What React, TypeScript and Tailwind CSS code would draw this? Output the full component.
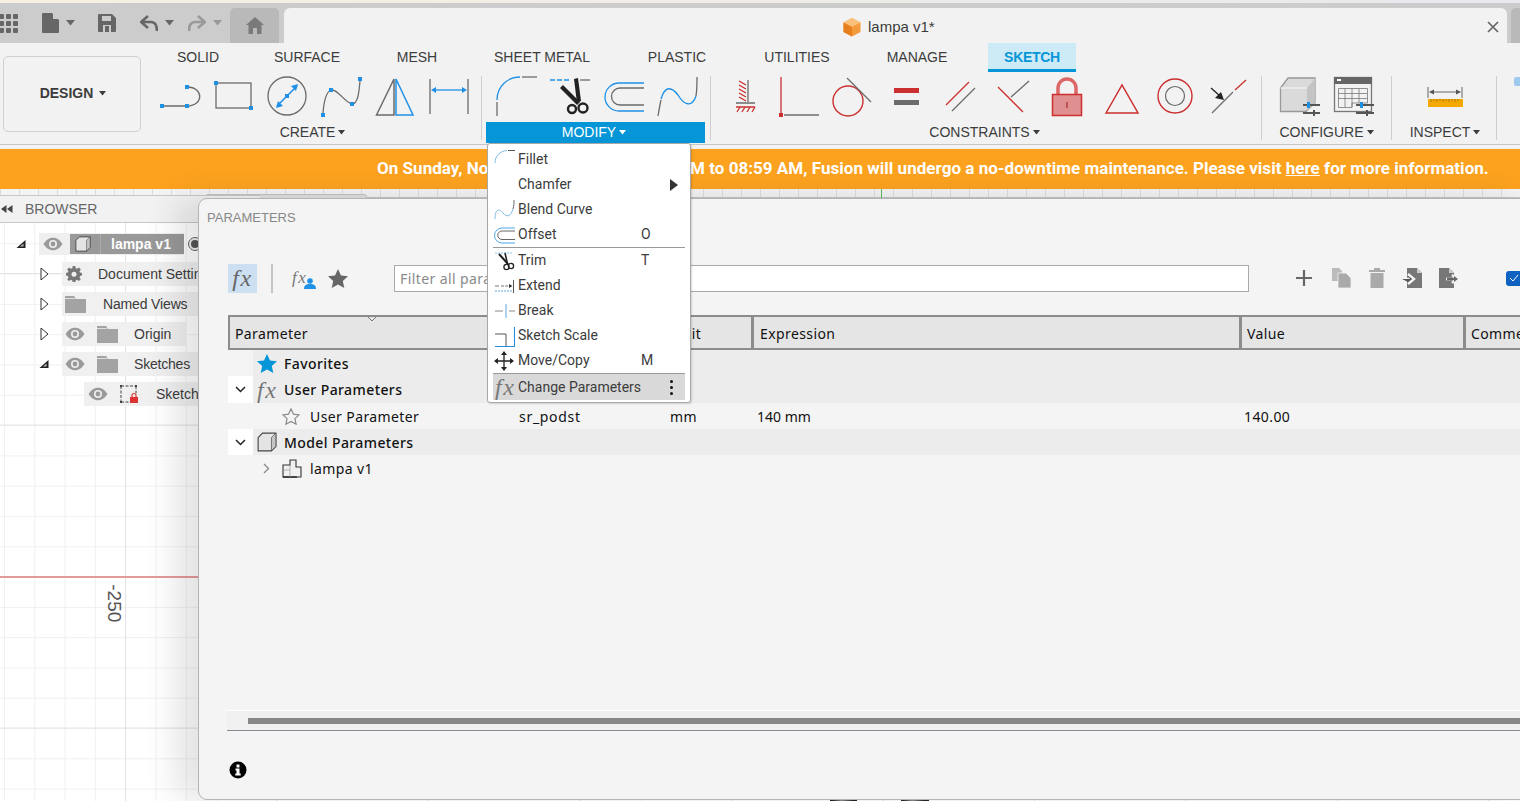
import React from "react";

const B = "#1e90e6";
const G = "#6b6b6b";
const R = "#cc2f2f";

function Ico({ x, children }: { x: number; children: React.ReactNode }) {
  return (
    <svg className="w-[54px] h-[44px] flex-none" viewBox={`${x} 76 54 44`} fill="none" strokeWidth="1.3">
      {children}
    </svg>
  );
}
function Sq({ x, y }: { x: number; y: number }) {
  return <rect x={x - 2} y={y - 2} width="4" height="4" fill={B} />;
}
function Sep() {
  return <div className="w-px h-[64px] mt-[4px] bg-[#cfcfcf] flex-none" />;
}
function Label({ children, className = "" }: { children: React.ReactNode; className?: string }) {
  return (
    <div className={`h-[20px] mt-[2px] flex items-center justify-center text-[14px] text-[#3c3c3c] gap-[3px] ${className}`}>
      {children}
      <Caret />
    </div>
  );
}
function Caret({ c = "#3c3c3c" }: { c?: string }) {
  return (
    <svg width="7" height="5" viewBox="0 0 7 5">
      <path d="M0 0h7L3.5 4.5z" fill={c} />
    </svg>
  );
}
function Tab({ className, children }: { className: string; children: React.ReactNode }) {
  return <div className={`flex items-center justify-center text-[14px] text-[#3c3c3c] ${className}`}>{children}</div>;
}

function Eye() {
  return (
    <svg width="20" height="14" viewBox="0 0 20 14" className="flex-none">
      <path d="M0.5 7C4 1.8 7 0.8 10 0.8S16 1.8 19.5 7C16 12.2 13 13.2 10 13.2S4 12.2 0.5 7z" fill="#9a9a9a" />
      <circle cx="10" cy="7" r="4" fill="#efefef" />
      <circle cx="10" cy="7" r="2.4" fill="#9a9a9a" />
    </svg>
  );
}
function Folder() {
  return (
    <svg width="21" height="17" viewBox="0 0 21 17" className="flex-none">
      <path d="M0 0h9l2 3h10v14H0z" fill="#a3a3a3" />
      <path d="M0 2.5h10" stroke="#efefef" strokeWidth="0.8" />
    </svg>
  );
}
function Open() {
  return (
    <svg width="9" height="14" viewBox="0 0 9 14" className="flex-none">
      <path d="M1 1l7 6-7 6z" fill="#fff" stroke="#333" strokeWidth="1" />
    </svg>
  );
}
function Down() {
  return (
    <svg width="10" height="10" viewBox="0 0 10 10" className="flex-none">
      <path d="M9.5 1v8H0.5z" fill="#222" />
      <path d="M7.5 4.5v3H4z" fill="#bbb" />
    </svg>
  );
}
function Fx({ className }: { className: string }) {
  return <span className={`font-['Liberation_Serif',serif] italic leading-none tracking-[1.5px] ${className}`}>fx</span>;
}
function Cube({ className, s = 18 }: { className?: string; s?: number }) {
  return (
    <svg width={s} height={s} viewBox="0 0 18 18" className={className}>
      <path d="M1 5l4-4h12v12l-4 4H1z" fill="#e4e4e4" stroke="#444" strokeWidth="1" />
      <path d="M13 5v12l4-4V1z" fill="#c4c4c4" stroke="#444" strokeWidth="0.6" />
    </svg>
  );
}
function Chevron() {
  return (
    <svg width="11" height="7" viewBox="0 0 11 7">
      <path d="M1 1l4.5 4.5L10 1" fill="none" stroke="#222" strokeWidth="1.5" />
    </svg>
  );
}

function MenuRow({ icon, label, right, className = "" }: { icon?: React.ReactNode; label: string; right?: React.ReactNode; className?: string }) {
  return (
    <div className={`flex items-center h-[25px] ${className}`}>
      <div className="w-[25px] h-full flex items-center flex-none">{icon}</div>
      <div className="flex-1">{label}</div>
      {right}
    </div>
  );
}
function Key({ children }: { children: string }) {
  return <div className="w-[44px] flex-none">{children}</div>;
}
function MI({ children }: { children: React.ReactNode }) {
  return (
    <svg width="23" height="22" viewBox="0 0 23 22" fill="none" strokeWidth="1" className="flex-none">
      {children}
    </svg>
  );
}

const cols = "grid grid-cols-[285px_151px_90px_488px_224px_200px]";

export default function App() {
  return (
    <div className="relative w-[1520px] h-[801px] overflow-hidden flex flex-col bg-white font-['Liberation_Sans',Arial,sans-serif]">
      <div className="h-[3px] flex-none bg-gradient-to-r from-[#f7f0e2] to-[#e8e9ee]" />

      {/* Quick access + document tab */}
      <div className="h-[40px] flex-none bg-[#cccccc] flex items-end">
        <div className="w-[230px] h-full flex items-center relative flex-none">
          <svg width="19" height="19" viewBox="0 0 19 19" className="ml-[-1px] flex-none">
            <g fill="#666">
              <rect x="0" y="0" width="5" height="5" rx="1" />
              <rect x="7" y="0" width="5" height="5" rx="1" />
              <rect x="14" y="0" width="5" height="5" rx="1" />
              <rect x="0" y="7" width="5" height="5" rx="1" />
              <rect x="7" y="7" width="5" height="5" rx="1" />
              <rect x="14" y="7" width="5" height="5" rx="1" />
              <rect x="0" y="14" width="5" height="5" rx="1" />
              <rect x="7" y="14" width="5" height="5" rx="1" />
              <rect x="14" y="14" width="5" height="5" rx="1" />
            </g>
          </svg>
          <svg width="17" height="20" viewBox="0 0 17 20" className="ml-[24px] flex-none">
            <path d="M1 0h9l7 7v12a1 1 0 0 1-1 1H1a1 1 0 0 1-1-1V1a1 1 0 0 1 1-1z" fill="#666" />
            <path d="M11 0l6 6h-6z" fill="#ccc" />
          </svg>
          <svg width="9" height="6" viewBox="0 0 9 6" className="ml-[7px] flex-none"><path d="M0 0h9L4.500 5.500z" fill="#666" /></svg>
          <svg width="18" height="18" viewBox="0 0 18 18" className="ml-[23px] flex-none">
            <path d="M1 0h13l4 4v13a1 1 0 0 1-1 1H1a1 1 0 0 1-1-1V1a1 1 0 0 1 1-1z" fill="#666" />
            <rect x="4" y="2" width="9" height="5" fill="#ccc" />
            <rect x="5" y="11" width="8" height="7" fill="#ccc" />
            <rect x="7" y="12" width="4" height="6" fill="#666" />
          </svg>
          <svg width="18" height="17" viewBox="0 0 18 17" className="ml-[24px] flex-none">
            <path d="M8 1L1 7l7 6M2 7h9c4 0 6 3 6 9" fill="none" stroke="#666" strokeWidth="2.600" />
          </svg>
          <svg width="9" height="6" viewBox="0 0 9 6" className="ml-[7px] flex-none"><path d="M0 0h9L4.500 5.500z" fill="#666" /></svg>
          <svg width="18" height="17" viewBox="0 0 18 17" className="ml-[14px] flex-none">
            <path d="M10 1l7 6-7 6M16 7H7c-4 0-6 3-6 9" fill="none" stroke="#999" strokeWidth="2.600" />
          </svg>
          <svg width="9" height="6" viewBox="0 0 9 6" className="ml-[7px] flex-none"><path d="M0 0h9L4.500 5.500z" fill="#999" /></svg>
        </div>
        <div className="w-[49px] h-[35px] flex-none rounded-t-[5px] bg-[#b9b9b9] flex items-center justify-center">
          <svg width="18" height="17" viewBox="0 0 18 17">
            <path d="M9 0L0 8h2.500v9h4.500v-6h4v6h4.500V8H18z" fill="#7a7a7a" />
          </svg>
        </div>
        <div className="w-[5px] flex-none" />
        <div className="w-[1223px] h-[35px] flex-none rounded-t-[6px] bg-[#f2f2f2] flex items-center relative">
          <div className="ml-[558px] flex items-center gap-[6px] text-[15px] text-[#3c3c3c] mt-[3px]">
            <svg width="20" height="20" viewBox="0 0 20 20" className="flex-none">
              <path d="M10 1l8.500 4.500v9.500L10 19.500 1.500 15V5.500z" fill="#f39a3c" />
              <path d="M10 1l8.500 4.500L10 10 1.500 5.500z" fill="#fbc17c" />
              <path d="M10 10v9.500L1.500 15V5.500z" fill="#e87f1e" />
            </svg>
            <span>lampa v1*</span>
          </div>
          <svg width="12" height="12" viewBox="0 0 12 12" className="absolute right-[8px] top-[13px]">
            <path d="M1 1l10 10M11 1L1 11" stroke="#666" strokeWidth="1.700" />
          </svg>
        </div>
        <div className="w-[4px] flex-none" />
        <div className="w-[9px] h-[35px] flex-none rounded-tl-[5px] bg-[#b9b9b9]" />
      </div>

      {/* Ribbon */}
      <div className="h-[102px] flex-none bg-[#f2f2f2] flex border-b border-[#c6c6c6]">
        <div className="w-[147px] flex-none pl-[3px] pt-[13px]">
          <div className="w-[138px] h-[76px] border border-[#d0d0d0] rounded-[5px] flex items-center justify-center gap-[6px] pb-[2px] pl-[2px] text-[14px] font-bold text-[#3c3c3c]">
            DESIGN
            <Caret />
          </div>
        </div>
        <div className="flex-1 flex flex-col min-w-0">
          <div className="h-[29px] flex flex-none">
            <Tab className="w-[101px] pl-[1px]">SOLID</Tab>
            <Tab className="w-[118px]">SURFACE</Tab>
            <Tab className="w-[102px]">MESH</Tab>
            <Tab className="w-[148px]">SHEET METAL</Tab>
            <Tab className="w-[122px]">PLASTIC</Tab>
            <Tab className="w-[118px]">UTILITIES</Tab>
            <Tab className="w-[122px]">MANAGE</Tab>
            <div className="w-[10px]" />
            <div className="w-[88px] bg-[#cdeaf7] border-b-[3px] border-[#0696d7] flex items-center justify-center text-[14px] font-bold text-[#0696d7] pt-[3px] tracking-[-0.3px]">SKETCH</div>
          </div>
          <div className="flex flex-1">
            {/* CREATE */}
            <div className="w-[334px] flex-none pt-[4px]">
              <div className="flex pl-[6px]">
                <Ico x={153}>
                  <path d="M164 106H187M187 87C204 87 204 106 187 106" stroke={G} />
                  <Sq x={162} y={106} /><Sq x={187} y={106} /><Sq x={187} y={87} />
                </Ico>
                <Ico x={207}>
                  <rect x="216" y="83" width="35" height="25" stroke={G} />
                  <Sq x={216} y={83} /><Sq x={251} y={108} />
                </Ico>
                <Ico x={261}>
                  <circle cx="287" cy="96" r="19" stroke={G} />
                  <path d="M277 106L297 86" stroke={B} strokeWidth="1.600" />
                  <path d="M276 108l7-2-5-5zM298 84l-7 2 5 5z" fill={B} />
                  <Sq x={287} y={96} />
                </Ico>
                <Ico x={315}>
                  <path d="M323 113C324 100 326 92 331 90C337 88 345 103 352 104C358 104 359 92 360 81" stroke={G} />
                  <Sq x={323} y={115} /><Sq x={331} y={90} /><Sq x={352} y={104} /><Sq x={360} y={79} />
                </Ico>
                <Ico x={369}>
                  <path d="M376.500 115L394 79V115z" stroke={G} strokeWidth="1.500" />
                  <path d="M396 115V79L413 115z" stroke={B} strokeWidth="1.500" />
                </Ico>
                <Ico x={423}>
                  <path d="M430 79V114M468 79V114" stroke={G} />
                  <path d="M434 90H464" stroke={B} strokeWidth="1.300" />
                  <path d="M431 90l5-3v6zM467 90l-5-3v6z" fill={B} />
                </Ico>
              </div>
              <Label className="pr-[3px]">CREATE</Label>
            </div>
            <Sep />
            <div className="w-[4px] flex-none" />
            {/* MODIFY */}
            <div className="w-[219px] flex-none pt-[4px]">
              <div className="flex pl-[3px]">
                <Ico x={489}>
                  <path d="M497 102V116" stroke={G} />
                  <path d="M497 100C497 86 508 77 520 77" stroke={B} />
                  <path d="M522 77H537" stroke={G} />
                </Ico>
                <Ico x={543}>
                  <path d="M550 80H571" stroke={B} strokeDasharray="5 2" />
                  <path d="M580 80H590" stroke={G} />
                  <path d="M560 88L563 85L580 102L577 105z" fill="#222" />
                  <path d="M574 79L578 78L581 101L577 103z" fill="#222" />
                  <circle cx="572" cy="109" r="4" stroke="#222" strokeWidth="2.400" />
                  <circle cx="583" cy="108" r="4.500" stroke="#222" strokeWidth="2.400" />
                </Ico>
                <Ico x={597}>
                  <path d="M644 83H619A14 14 0 0 0 619 111H644" stroke={B} />
                  <path d="M644 88H620A8.500 8.500 0 0 0 620 105H644" stroke={G} />
                </Ico>
                <Ico x={651}>
                  <path d="M658 116C659 110 660 104 661 100M696 96C697 90 697 84 697 77" stroke={G} />
                  <path d="M661 99C665 85 672 87 678 95C684 105 692 108 696 96" stroke={B} />
                </Ico>
              </div>
              <div className="h-[21px] mt-[2px] bg-[#0696d7] text-white text-[14px] flex items-center justify-center gap-[3px] pr-[3px]">
                MODIFY
                <Caret c="#fff" />
              </div>
            </div>
            <div className="w-[5px] flex-none" />
            <Sep />
            {/* CONSTRAINTS */}
            <div className="w-[550px] flex-none pt-[4px]">
              <div className="flex pl-[7px]">
                <Ico x={718}>
                  <path d="M748 80V102M736 103H755" stroke={G} />
                  <path d="M739 81l7 4M739 85l7 4M739 89l7 4M739 93l7 4M739 97l7 4" stroke={R} />
                  <path d="M736 107H755" stroke={R} strokeWidth="1.500" />
                  <path d="M740 107l-3 5M745 107l-3 5M750 107l-3 5M755 107l-3 5" stroke={R} />
                </Ico>
                <Ico x={772}>
                  <path d="M781 77V113" stroke={R} />
                  <rect x="779" y="113" width="4" height="4" fill={R} />
                  <path d="M784 115H819" stroke={G} />
                </Ico>
                <Ico x={826}>
                  <circle cx="848" cy="101" r="15" stroke={R} strokeWidth="1.400" />
                  <path d="M847 78L871 102" stroke={G} />
                </Ico>
                <Ico x={880}>
                  <rect x="894" y="88" width="25" height="5" fill={R} />
                  <rect x="894" y="100" width="25" height="5" fill={G} />
                </Ico>
                <Ico x={934}>
                  <path d="M946 105L969 82" stroke={R} />
                  <path d="M952 111L975 88" stroke={G} />
                </Ico>
                <Ico x={988}>
                  <path d="M998 87L1023 112" stroke={R} />
                  <path d="M1011 97L1029 81" stroke={G} />
                </Ico>
                <Ico x={1042}>
                  <path d="M1058 95V88A9 9 0 0 1 1076 88V95" stroke="#d66" strokeWidth="3.500" />
                  <rect x="1052.500" y="94.500" width="29" height="21" fill="#e08f91" stroke={R} strokeWidth="1.500" />
                  <path d="M1067 102V108" stroke="#a33" />
                </Ico>
                <Ico x={1096}>
                  <path d="M1106 113L1122 85L1138 113z" stroke={R} strokeWidth="1.500" />
                </Ico>
                <Ico x={1150}>
                  <circle cx="1175" cy="96" r="17" stroke={R} strokeWidth="1.400" />
                  <circle cx="1175" cy="96" r="9.500" stroke={G} strokeWidth="1.200" />
                </Ico>
                <Ico x={1204}>
                  <path d="M1212 113L1233 92" stroke={G} />
                  <path d="M1235 90L1246 80" stroke={R} />
                  <path d="M1211 88L1220 96" stroke="#222" strokeWidth="1.300" />
                  <path d="M1224 100l-9-2 6-6z" fill="#222" />
                </Ico>
              </div>
              <Label className="pr-[3px]">CONSTRAINTS</Label>
            </div>
            <Sep />
            {/* CONFIGURE */}
            <div className="w-[129px] flex-none pt-[4px]">
              <div className="flex pl-[9px]">
                <Ico x={1271}>
                  <path d="M1280.500 88L1288 78H1315V103L1306 111.500H1280.500z" fill="#dadada" stroke="#999" />
                  <path d="M1307 88L1315 78V103L1307 111z" fill="#c4c4c4" />
                  <path d="M1280.500 88H1307" stroke="#f2f2f2" />
                  <path d="M1303 105H1320M1303 113H1320" stroke="#555" strokeWidth="2.200" />
                  <rect x="1307" y="102" width="3" height="6" fill={B} />
                  <path d="M1314 110V116" stroke="#555" strokeWidth="2" />
                </Ico>
                <Ico x={1325}>
                  <rect x="1334.500" y="77.500" width="37" height="34" fill="#f2f2f2" stroke="#777" />
                  <rect x="1334" y="77" width="38" height="7" fill="#666" />
                  <rect x="1337" y="79" width="4" height="2" fill="#fff" />
                  <path d="M1338.500 88.500H1367.500V103H1352V107.500H1338.500zM1338.500 93.500H1367M1338.500 98.500H1367M1345 88.500V107M1352 88.500V107M1359 88.500V103" stroke="#777" strokeWidth="0.800" />
                  <path d="M1356 105H1374M1356 113H1374" stroke="#555" strokeWidth="2.200" />
                  <rect x="1360" y="102" width="3" height="6" fill={B} />
                  <path d="M1367 110V116" stroke="#555" strokeWidth="2" />
                </Ico>
              </div>
              <Label>CONFIGURE</Label>
            </div>
            <Sep />
            {/* INSPECT */}
            <div className="w-[104px] flex-none pt-[4px]">
              <div className="flex pl-[26px]">
                <Ico x={1418}>
                  <path d="M1428 87V98M1462 87V98M1430 92H1460" stroke="#555" strokeWidth="0.900" />
                  <path d="M1429 92l5-2.500v5zM1461 92l-5-2.500v5z" fill="#555" />
                  <rect x="1428" y="99" width="35" height="8" fill="#f5a800" />
                  <path d="M1431 99v3M1434 99v2M1437 99v3M1440 99v2M1443 99v3M1446 99v2M1449 99v3M1452 99v2M1455 99v3M1458 99v2" stroke="#8a6a10" strokeWidth="0.700" />
                </Ico>
              </div>
              <Label className="pl-[2px]">INSPECT</Label>
            </div>
            <Sep />
            <div className="pl-[17px] pt-[5px]">
              <div className="w-[10px] h-[9px] rounded-[2px] bg-[#9fc9ee]" />
            </div>
          </div>
        </div>
      </div>

      <div className="h-[4px] flex-none bg-[#f2f2f2]" />

      {/* Banner */}
      <div className="h-[40px] flex-none bg-[#fca21f] text-white font-['Roboto',sans-serif] font-bold text-[17px] tracking-[0.035px] flex items-center">
        <span className="ml-[377px] w-[313px] flex-none whitespace-nowrap overflow-hidden">On Sunday, No</span>
        <span className="whitespace-nowrap">
          M to 08:59 AM, Fusion will undergo a no-downtime maintenance. Please visit <span className="underline">here</span> for more information.
        </span>
      </div>

      {/* Canvas */}
      <div className="relative flex-1 bg-white bg-[linear-gradient(to_right,#e4e4e4_1px,transparent_1px),linear-gradient(to_bottom,#e4e4e4_1px,transparent_1px),linear-gradient(to_right,#f0f0f0_1px,transparent_1px),linear-gradient(to_bottom,#f0f0f0_1px,transparent_1px)] bg-[size:151.500px_151.500px,151.500px_151.500px,30.300px_30.300px,30.300px_30.300px] bg-[position:125px_84px,125px_84px,4px_24px,4px_24px]">
        <div className="h-[9px] bg-[#f4f4f4] border-b border-[#c4c4c4] bg-[linear-gradient(to_right,#dedede_1px,transparent_1px)] bg-[size:19px_100%]" />
        <div className="absolute left-[881px] top-0 h-[9px] w-px bg-[#5cbf5c]" />
        <div className="absolute left-0 right-0 top-[387px] h-[2px] bg-[#e59a9a]" />
        <div className="absolute left-[102px] top-[399px] w-[24px] h-[30px] flex items-center justify-center">
          <span className="rotate-90 text-[19px] text-[#555] whitespace-nowrap">-250</span>
        </div>
        <div className="absolute left-[205px] top-[5px] w-[162px] h-[6px] bg-[#e0e0e0] border border-[#c4c4c4] rounded-t-[3px]" />
        <svg className="absolute left-[825px] top-[608px]" width="110" height="4" viewBox="0 0 110 4">
          <path d="M5 3.500C15 2 25 3 32 3.500M76 3.500C85 2 95 3 104 3.500" stroke="#222" strokeWidth="1.500" fill="none" />
        </svg>

        {/* Browser panel */}
        <div className="absolute left-0 top-[6px] w-[260px]">
          <div className="h-[28px] bg-[#f2f2f2] border-y border-[#c8c8c8] flex items-center pl-[1px] gap-[12px] text-[14px] text-[#666]">
            <svg width="12" height="8" viewBox="0 0 12 8" className="flex-none">
              <path d="M5.500 0v8L0 4zM11.500 0v8L6 4z" fill="#444" />
            </svg>
            BROWSER
          </div>
          <div className="pt-[6px] text-[14px] text-[#3c3c3c]">
            <div className="h-[30px] flex items-center pl-[16px]">
              <Down />
              <div className="ml-[13px] h-[22px] w-[145px] bg-[#efefef] flex items-center pl-[4px]">
                <Eye />
                <div className="ml-[7px] h-[20px] w-[114px] bg-[#999999] flex items-center">
                  <Cube className="ml-[5px]" s={16} />
                  <div className="ml-[9px] w-px h-full bg-[#aaa]" />
                  <span className="ml-[10px] font-bold text-white">lampa v1</span>
                </div>
              </div>
              <div className="ml-[4px] w-[14px] h-[14px] rounded-full border border-[#666] bg-[#eee] flex items-center justify-center">
                <div className="w-[8px] h-[8px] rounded-full bg-[#555]" />
              </div>
            </div>
            <div className="h-[30px] flex items-center pl-[40px]">
              <Open />
              <div className="ml-[13px] h-[24px] w-[160px] bg-[#f0f0f0] flex items-center pl-[4px] whitespace-nowrap">
                <svg width="16" height="16" viewBox="0 0 16 16" className="flex-none">
                  <path d="M6.700 0h2.600l.4 2.200 1.400.6L13 1.500 14.800 3.400l-1.300 1.800.6 1.400 2 .4v2.600l-2 .4-.6 1.400 1.300 1.800-1.800 1.900-1.900-1.300-1.400.6-.4 2.200H6.700l-.4-2.200-1.400-.6L3 15.100 1.200 13.200l1.300-1.800-.6-1.400-2-.4V7l2-.4.6-1.400L1.200 3.400 3 1.500l1.900 1.300 1.400-.6z" fill="#777" />
                  <circle cx="8" cy="8.300" r="2.500" fill="#f0f0f0" />
                </svg>
                <span className="ml-[16px]">Document Settings</span>
              </div>
            </div>
            <div className="h-[30px] flex items-center pl-[40px]">
              <Open />
              <div className="ml-[13px] h-[24px] w-[136px] bg-[#f0f0f0] flex items-center pl-[3px]">
                <Folder />
                <span className="ml-[17px] tracking-[-0.15px]">Named Views</span>
              </div>
            </div>
            <div className="h-[30px] flex items-center pl-[40px]">
              <Open />
              <div className="ml-[13px] h-[24px] w-[124px] bg-[#f0f0f0] flex items-center pl-[3px]">
                <Eye />
                <div className="ml-[12px]"><Folder /></div>
                <span className="ml-[16px]">Origin</span>
              </div>
            </div>
            <div className="h-[30px] flex items-center pl-[39px]">
              <Down />
              <div className="ml-[13px] h-[24px] w-[136px] bg-[#f0f0f0] flex items-center pl-[3px]">
                <Eye />
                <div className="ml-[12px]"><Folder /></div>
                <span className="ml-[16px] tracking-[-0.2px]">Sketches</span>
              </div>
            </div>
            <div className="h-[30px] flex items-center pl-[84px]">
              <div className="h-[24px] w-[130px] bg-[#f0f0f0] flex items-center pl-[4px]">
                <Eye />
                <svg width="20" height="20" viewBox="0 0 20 20" className="ml-[11px] flex-none">
                  <path d="M2 2H17M2 2V18M2 18H10M17 2V10" stroke="#444" strokeWidth="1" strokeDasharray="3 1.500" fill="none" />
                  <rect x="1" y="1" width="2" height="2" fill="#444" />
                  <rect x="16" y="1" width="2" height="2" fill="#444" />
                  <rect x="1" y="17" width="2" height="2" fill="#444" />
                  <rect x="11" y="13" width="8" height="6" fill="#d33" />
                  <path d="M13 13V11.500a2 2 0 0 1 4 0V13" stroke="#d33" strokeWidth="1.200" fill="none" />
                </svg>
                <span className="ml-[17px]">Sketch1</span>
              </div>
            </div>
          </div>
        </div>

        {/* Parameters dialog */}
        <div className="absolute left-[198px] top-[9px] w-[1340px] h-[602px] bg-[#f4f4f4] border border-[#b4b4b4] rounded-[9px] shadow-[-22px_0_32px_rgba(0,0,0,0.11)] flex flex-col font-['Noto_Sans',sans-serif] text-[14px] text-[#111] tracking-[0.4px]">
          <div className="h-[38px] flex-none pl-[8px] flex items-center font-['Liberation_Sans',sans-serif] text-[13px] tracking-normal text-[#888]">PARAMETERS</div>
          <div className="h-[30px] flex-none mt-[26px] pl-[29px] flex items-center">
            <div className="w-[29px] h-[29px] bg-[#cde0f2] flex items-center justify-center flex-none">
              <Fx className="text-[24px] text-[#666]" />
            </div>
            <div className="ml-[14px] w-[2px] h-[29px] bg-[#c4c4c4] flex-none" />
            <div className="ml-[19px] relative w-[22px] h-[22px] flex-none">
              <Fx className="text-[17px] text-[#777]" />
              <svg width="12" height="11" viewBox="0 0 12 11" className="absolute right-[-2px] bottom-0">
                <circle cx="6" cy="3" r="2.800" fill={B} />
                <path d="M0 11c0-4 2.500-5 6-5s6 1 6 5z" fill={B} />
              </svg>
            </div>
            <svg width="20" height="19" viewBox="0 0 20 19" className="ml-[14px] flex-none">
              <path d="M10 0l3 6.500 7 .8-5.200 4.700 1.500 7L10 15.500 3.700 19l1.500-7L0 7.300l7-.8z" fill="#666" />
            </svg>
            <div className="ml-[46px] w-[855px] h-[27px] bg-white border border-[#aaa] flex items-center pl-[5px] text-[#8a8a8a] flex-none">Filter all parameters</div>
            <svg width="16" height="16" viewBox="0 0 16 16" className="ml-[47px] flex-none">
              <path d="M8 0v16M0 8h16" stroke="#666" strokeWidth="2.200" />
            </svg>
            <svg width="20" height="20" viewBox="0 0 20 20" className="ml-[20px] flex-none">
              <path d="M0 0h7l3 3v10H0z" fill="#bbb" />
              <path d="M6 5h8l5 5v10H6z" fill="#aaa" stroke="#f4f4f4" strokeWidth="0.800" />
            </svg>
            <svg width="16" height="20" viewBox="0 0 16 20" className="ml-[17px] flex-none">
              <path d="M0 2h16v2H0zM5 0h6v2H5zM1.500 5h13v15h-13z" fill="#aaa" />
            </svg>
            <svg width="20" height="20" viewBox="0 0 20 20" className="ml-[17px] flex-none">
              <path d="M5 0h10l5 5v15H5z" fill="#777" />
              <path d="M15 0l5 5h-5z" fill="#ccc" />
              <path d="M0 11h8M6 6l6 5-6 5" fill="none" stroke="#f4f4f4" strokeWidth="2.400" />
              <path d="M0 11h8l-2-3 4 3-4 3z" fill="#555" />
            </svg>
            <svg width="20" height="20" viewBox="0 0 20 20" className="ml-[17px] flex-none">
              <path d="M0 0h10l5 5v15H0z" fill="#777" />
              <path d="M10 0l5 5h-5z" fill="#ccc" />
              <path d="M7 11h8M13 7l5 4-5 4" fill="none" stroke="#f4f4f4" strokeWidth="2.400" />
              <path d="M8 10h7V8l4 3-4 3v-2H8z" fill="#666" />
            </svg>
            <div className="ml-[47px] w-[16px] h-[15px] rounded-[3px] bg-[#0f62c0] flex items-center justify-center flex-none">
              <svg width="10" height="8" viewBox="0 0 10 8"><path d="M1 4l3 3 5-6" fill="none" stroke="#fff" strokeWidth="1" /></svg>
            </div>
          </div>

          {/* Table */}
          <div className="ml-[29px] mt-[22px] flex-none">
            <div className={`${cols} h-[35px] bg-[#e5e5e5] border-y-2 border-[#8c8c8c] relative`}>
              <div className="border-x-2 border-[#8c8c8c] pl-[5px] pt-[1px] flex items-center">Parameter</div>
              <div className="border-r-2 border-[#8c8c8c]" />
              <div className="border-r-[3px] border-[#8c8c8c] pl-[8px] pt-[1px] flex items-center">Unit</div>
              <div className="border-r-[3px] border-[#8c8c8c] pl-[6px] pt-[1px] flex items-center">Expression</div>
              <div className="border-r-[3px] border-[#8c8c8c] pl-[5px] pt-[1px] flex items-center">Value</div>
              <div className="pl-[5px] pt-[1px] flex items-center">Comments</div>
              <svg width="10" height="6" viewBox="0 0 10 6" className="absolute left-[139px] top-[-1px]">
                <path d="M0.500 0.500L5 5l4.500-4.500" fill="none" stroke="#777" strokeWidth="1" />
              </svg>
            </div>
            <div className="h-[26px] flex items-center bg-[#ececec] ml-[25px]">
              <svg width="20" height="19" viewBox="0 0 20 19" className="ml-[4px] flex-none">
                <path d="M10 0l3 6.500 7 .8-5.200 4.700 1.500 7L10 15.500 3.700 19l1.500-7L0 7.300l7-.8z" fill="#0696d7" />
              </svg>
              <span className="ml-[7px] font-medium">Favorites</span>
            </div>
            <div className="h-[27px] flex items-center bg-[#ececec]">
              <div className="w-[25px] h-full bg-white flex items-center justify-center flex-none"><Chevron /></div>
              <Fx className="ml-[4px] w-[22px] text-[24px] text-[#777]" />
              <span className="ml-[5px] font-medium">User Parameters</span>
            </div>
            <div className={`${cols} h-[26px] items-center`}>
              <div className="pl-[54px] flex items-center">
                <svg width="18" height="17" viewBox="0 0 20 19" className="flex-none">
                  <path d="M10 1l2.800 5.900 6.200.8-4.600 4.200 1.300 6.200L10 15 4.300 18.100l1.300-6.200L1 7.700l6.200-.8z" fill="none" stroke="#888" strokeWidth="1.300" />
                </svg>
                <span className="ml-[10px]">User Parameter</span>
              </div>
              <div className="pl-[6px] tracking-[0.7px]">sr_podst</div>
              <div className="pl-[6px]">mm</div>
              <div className="pl-[3px] tracking-normal">140 mm</div>
              <div className="pl-[2px]">140.00</div>
              <div />
            </div>
            <div className="h-[26px] flex items-center bg-[#ececec]">
              <div className="w-[25px] h-full bg-white flex items-center justify-center flex-none"><Chevron /></div>
              <Cube className="ml-[4px] flex-none" s={20} />
              <span className="ml-[7px] font-medium">Model Parameters</span>
            </div>
            <div className="h-[26px] flex items-center">
              <svg width="7" height="11" viewBox="0 0 7 11" className="ml-[35px] flex-none">
                <path d="M1 1l4.500 4.500L1 10" fill="none" stroke="#888" strokeWidth="1.300" />
              </svg>
              <svg width="20" height="19" viewBox="0 0 20 19" className="ml-[12px] flex-none">
                <path d="M1 6h7V1h6v7h5v10H1z" fill="#f0f0f0" stroke="#333" strokeWidth="1.100" />
                <path d="M1 18h14" stroke="#333" strokeWidth="1.600" />
                <path d="M8 6v12M1 11h7" stroke="#999" strokeWidth="0.700" />
              </svg>
              <span className="ml-[8px]">lampa v1</span>
            </div>
          </div>

          <div className="flex-1" />
          <div className="ml-[28px] h-[21px] flex-none border-t border-b border-t-white border-b-[#8a8a96] bg-[#f0f0f0] flex items-center pl-[21px]">
            <div className="w-full h-[6px] bg-[#888888]" />
          </div>
          <div className="h-[68px] flex-none pl-[30px] pt-[30px]">
            <svg width="18" height="18" viewBox="0 0 18 18">
              <circle cx="9" cy="9" r="8.500" fill="#000" />
              <rect x="7.500" y="3.500" width="3" height="3" fill="#fff" />
              <path d="M6.500 7.500h4v5h1.200v2H6.300v-2h1.200v-3h-1z" fill="#fff" />
            </svg>
          </div>
        </div>
      </div>

      {/* MODIFY dropdown */}
      <div className="absolute left-[487px] top-[143px] w-[204px] h-[260px] bg-white border border-[#a8a8a8] rounded-[3px] px-[5px] pt-[3px] font-['Roboto',sans-serif] text-[14px] text-[#3c3c3c] shadow-[1px_1px_2px_rgba(0,0,0,0.15)]">
        <MenuRow label="Fillet" icon={<MI><path d="M2 14C2 7 7 2 14 1.500" stroke="#7dbce8" /><path d="M15 1.500h7" stroke="#555" /></MI>} />
        <MenuRow label="Chamfer" right={<svg width="8" height="12" viewBox="0 0 8 12" className="mr-[7px]"><path d="M0 0l8 6-8 6z" fill="#333" /></svg>} />
        <MenuRow label="Blend Curve" icon={<MI><path d="M2 20C2 10 6 9 10 14C14 19 18 17 20 10" stroke="#7dbce8" /><path d="M20 10C21 7 21 4 21 1" stroke="#666" /></MI>} />
        <MenuRow label="Offset" right={<Key>O</Key>} icon={<MI><path d="M22 4H9A7.500 7.500 0 0 0 9 19H22" stroke="#4ba7e6" /><path d="M22 7H9A4 4 0 0 0 9 15.500H22" stroke="#666" /></MI>} />
        <div className="h-px bg-[#999]" />
        <MenuRow label="Trim" right={<Key>T</Key>} icon={<MI><path d="M2 3h18" stroke="#8cc4ea" strokeDasharray="2 1" /><path d="M6 4L15 14" stroke="#222" strokeWidth="2" /><path d="M12 3L14.500 14" stroke="#222" strokeWidth="1.600" /><circle cx="13.500" cy="17" r="2.600" stroke="#222" strokeWidth="1.300" /><circle cx="18" cy="16" r="2.600" stroke="#222" strokeWidth="1.300" /></MI>} />
        <MenuRow label="Extend" icon={<MI><path d="M2 11H6" stroke="#777" /><path d="M8 11H17" stroke="#777" strokeDasharray="3 1" /><path d="M19.500 11l-3.500-2v4z" fill="#333" /><path d="M2 16H20" stroke="#5aa9e0" strokeDasharray="2 1" /><path d="M20.500 5V18" stroke="#555" /></MI>} />
        <MenuRow label="Break" icon={<MI><path d="M2 11H10M16 11H22" stroke="#888" /><path d="M13 4V18" stroke="#5aa9e0" /></MI>} />
        <MenuRow label="Sketch Scale" icon={<MI><path d="M2 9H13V21" stroke="#555" /><path d="M2 21.500H21.500V2" stroke="#1e90e6" strokeWidth="1.100" /></MI>} />
        <MenuRow label="Move/Copy" right={<Key>M</Key>} icon={<MI><path d="M11 3v16M3 11h16" stroke="#222" strokeWidth="1.300" /><path d="M11 1l-3 4h6zM11 21l-3-4h6zM1 11l4-3v6zM21 11l-4-3v6z" fill="#222" /></MI>} />
        <div className="h-px bg-[#999]" />
        <MenuRow
          label="Change Parameters"
          className="h-[26px] bg-[#d9d9d9]"
          icon={<Fx className="ml-[2px] text-[24px] text-[#777]" />}
          right={
            <div className="w-[3px] mr-[12px] flex flex-col gap-[3px]">
              <div className="h-[3px] bg-[#111] rounded-full" />
              <div className="h-[3px] bg-[#111] rounded-full" />
              <div className="h-[3px] bg-[#111] rounded-full" />
            </div>
          }
        />
      </div>
    </div>
  );
}
